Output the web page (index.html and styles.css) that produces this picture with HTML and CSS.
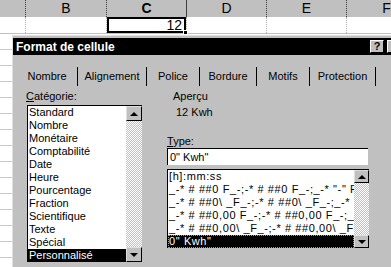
FILE: index.html
```html
<!DOCTYPE html>
<html lang="fr">

<head>
	<meta charset="UTF-8">
	<title>Format de cellule</title>
	<link rel="stylesheet" href="styles.css">
</head>

<body>

	<!-- feuille de calcul en fond -->
	<div class="sheet">
		<div class="heads">
			<div class="head head-a"></div>
			<div class="head head-b">B</div>
			<div class="head head-sel">C</div>
			<div class="head">D</div>
			<div class="head">E</div>
			<div class="head">F</div>
		</div>
		<div class="row">
			<div class="cell cell-a"></div>
			<div class="cell cell-b"></div>
			<div class="cell cell-sel">12<span class="fill-handle"></span></div>
			<div class="cell"></div>
			<div class="cell"></div>
			<div class="cell"></div>
		</div>
		<div class="row-blank"></div>
		<div class="row-blank"></div>
		<div class="row-blank"></div>
		<div class="row-blank"></div>
		<div class="row-blank"></div>
		<div class="row-blank"></div>
		<div class="row-blank"></div>
		<div class="row-blank"></div>
		<div class="row-blank"></div>
		<div class="row-blank"></div>
		<div class="row-blank"></div>
		<div class="row-blank"></div>
		<div class="row-blank"></div>
		<div class="row-blank"></div>
	</div>

	<!-- boite de dialogue -->
	<div class="dialog">
		<div class="titlebar">
			<span class="title">Format de cellule</span>
			<span class="tbtn">?</span>
			<span class="tbtn tbtn-close"></span>
		</div>

		<ul class="tabs">
			<li class="tab tab-nombre">Nombre</li>
			<li class="tab tab-align">Alignement</li>
			<li class="tab tab-police">Police</li>
			<li class="tab tab-bordure">Bordure</li>
			<li class="tab tab-motifs">Motifs</li>
			<li class="tab tab-protection">Protection</li>
		</ul>

		<div class="panel">
			<div class="col-left">
				<div class="label"><u>C</u>atégorie:</div>
				<div class="listbox list-cat">
					<ul class="items">
						<li>Standard</li>
						<li>Nombre</li>
						<li>Monétaire</li>
						<li>Comptabilité</li>
						<li>Date</li>
						<li>Heure</li>
						<li>Pourcentage</li>
						<li>Fraction</li>
						<li>Scientifique</li>
						<li>Texte</li>
						<li>Spécial</li>
						<li class="selected">Personnalisé</li>
					</ul>
					<div class="scroll">
						<div class="sbtn up"></div>
						<div class="track"></div>
						<div class="sbtn down"></div>
					</div>
				</div>
			</div>

			<div class="col-right">
				<div class="preview-label">Aperçu</div>
				<div class="preview">12 Kwh</div>
				<div class="label type-label"><u>T</u>ype:</div>
				<div class="input">0" Kwh"</div>
				<div class="listbox list-type">
					<ul class="items">
						<li>[h]:mm:ss</li>
						<li>_-* # ##0 F_-;-* # ##0 F_-;_-* "-" F</li>
						<li>_-* # ##0\ _F_-;-* # ##0\ _F_-;_-*</li>
						<li>_-* # ##0,00 F_-;-* # ##0,00 F_-;_</li>
						<li>_-* # ##0,00\ _F_-;-* # ##0,00\ _F</li>
						<li class="selected focus">0" Kwh"</li>
					</ul>
					<div class="scroll">
						<div class="sbtn up"></div>
						<div class="track"></div>
						<div class="sbtn down"></div>
					</div>
				</div>
			</div>
		</div>
	</div>

</body>

</html>
```

FILE: styles.css
```css
* {
	padding: 0;
	margin: 0;
	box-sizing: border-box;
}

ul {
	list-style: none;
}

body {
	width: 391px;
	height: 267px;
	overflow: hidden;
	position: relative;
	background-color: #fff;
	font-family: "Liberation Sans", Arial, sans-serif;
	font-size: 11px;
	color: #000;
}

/* feuille */

.heads {
	display: flex;
	height: 17px;
	background-color: #c0c0c0;
}

.head {
	flex: none;
	width: 80px;
	border-right: 1px dotted #404040;
	text-align: center;
	font-size: 14px;
	line-height: 17px;
}

.head-sel {
	font-weight: bold;
	border-right: 1px solid #404040;
}

.row {
	display: flex;
	height: 17px;
	border-bottom: 1px solid #c0c0c0;
}

.cell {
	flex: none;
	width: 80px;
	border-right: 1px dotted #b0b0b0;
}

/* colonne A coupée, B un peu plus large */
.head-a,
.cell-a {
	width: 26px;
}

.head-b,
.cell-b {
	width: 81px;
}

.cell-sel {
	position: relative;
	text-align: right;
	padding-right: 4px;
	font-size: 14px;
	line-height: 16px;
	box-shadow: inset 0 0 0 2px #000;
}

.fill-handle {
	position: absolute;
	right: -2px;
	bottom: -2px;
	width: 5px;
	height: 5px;
	background-color: #000;
	border: 1px solid #fff;
}

.row-blank {
	height: 16px;
	border-bottom: 1px solid #c8c8c8;
}

/* dialogue */

.dialog {
	position: absolute;
	left: 12px;
	top: 35px;
	right: -12px;
	bottom: 0;
	background-color: #c0c0c0;
	border-top: 1px solid #dfdfdf;
	border-left: 1px solid #dfdfdf;
	padding-top: 2px;
}

.titlebar {
	display: flex;
	align-items: center;
	gap: 3px;
	height: 17px;
	padding: 0 2px 0 3px;
	background-color: #000;
	color: #fff;
}

.title {
	margin-right: auto;
	font-size: 12px;
	font-weight: bold;
}

.tbtn {
	width: 14px;
	height: 13px;
	background-color: #c0c0c0;
	border: 1px solid;
	border-color: #fff #000 #000 #fff;
	color: #000;
	font-size: 11px;
	font-weight: bold;
	line-height: 11px;
	text-align: center;
}

.tabs {
	display: flex;
	height: 19px;
	margin: 12px 0 0 4px;
}

.tab {
	border-right: 1px solid #000;
	text-align: center;
	line-height: 19px;
}

.tab-nombre { width: 61px; }
.tab-align { width: 69px; }
.tab-police { width: 53px; }
.tab-bordure { width: 57px; }
.tab-motifs { width: 53px; }
.tab-protection { width: 66px; }

.panel {
	display: flex;
	margin-top: 4px;
	padding-left: 13px;
}

.label {
	line-height: 13px;
}

.listbox {
	display: flex;
	border-top: 1px solid #000;
	border-left: 1px solid #000;
}

.items {
	flex: 1;
	min-width: 0;
	background-color: #fff;
}

.items li {
	height: 13px;
	line-height: 13px;
	padding-left: 1px;
	white-space: nowrap;
	overflow: hidden;
}

.items .selected {
	background-color: #000;
	color: #fff;
}

.items .focus {
	outline: 1px dotted #9a9a9a;
	outline-offset: -1px;
}

.list-cat {
	width: 115px;
	height: 157px;
	margin: 2px 0 0 1px;
}

.list-cat .scroll {
	width: 16px;
}

.scroll {
	display: flex;
	flex-direction: column;
}

.sbtn {
	position: relative;
	height: 15px;
	background-color: #c0c0c0;
	border: 1px solid;
	border-color: #dfdfdf #000 #000 #dfdfdf;
}

.sbtn::after {
	content: "";
	position: absolute;
	left: 50%;
	top: 50%;
	margin: -2px 0 0 -4px;
	border: 4px solid transparent;
}

.up::after {
	border-top: 0;
	border-bottom-color: #000;
}

.down::after {
	border-bottom: 0;
	border-top-color: #000;
}

.track {
	flex: 1;
	background: repeating-conic-gradient(#fff 0 25%, #c0c0c0 0 50%) 0 0 / 2px 2px;
}

.col-right {
	margin-left: 25px;
}

.preview-label {
	padding-left: 6px;
	line-height: 13px;
}

.preview {
	padding-left: 9px;
	margin-top: 3px;
	line-height: 13px;
}

.type-label {
	margin-top: 16px;
}

.input {
	width: 201px;
	height: 17px;
	padding-left: 2px;
	background-color: #fff;
	border-top: 1px solid #000;
	border-left: 1px solid #000;
	line-height: 16px;
}

.list-type {
	width: 202px;
	height: 79px;
	margin-top: 4px;
}

/* police bitmap plus large : on espace un peu */
.list-type .items li {
	letter-spacing: 0.6px;
}

.list-type .scroll {
	width: 15px;
}

.list-type .sbtn {
	height: 13px;
}
```
